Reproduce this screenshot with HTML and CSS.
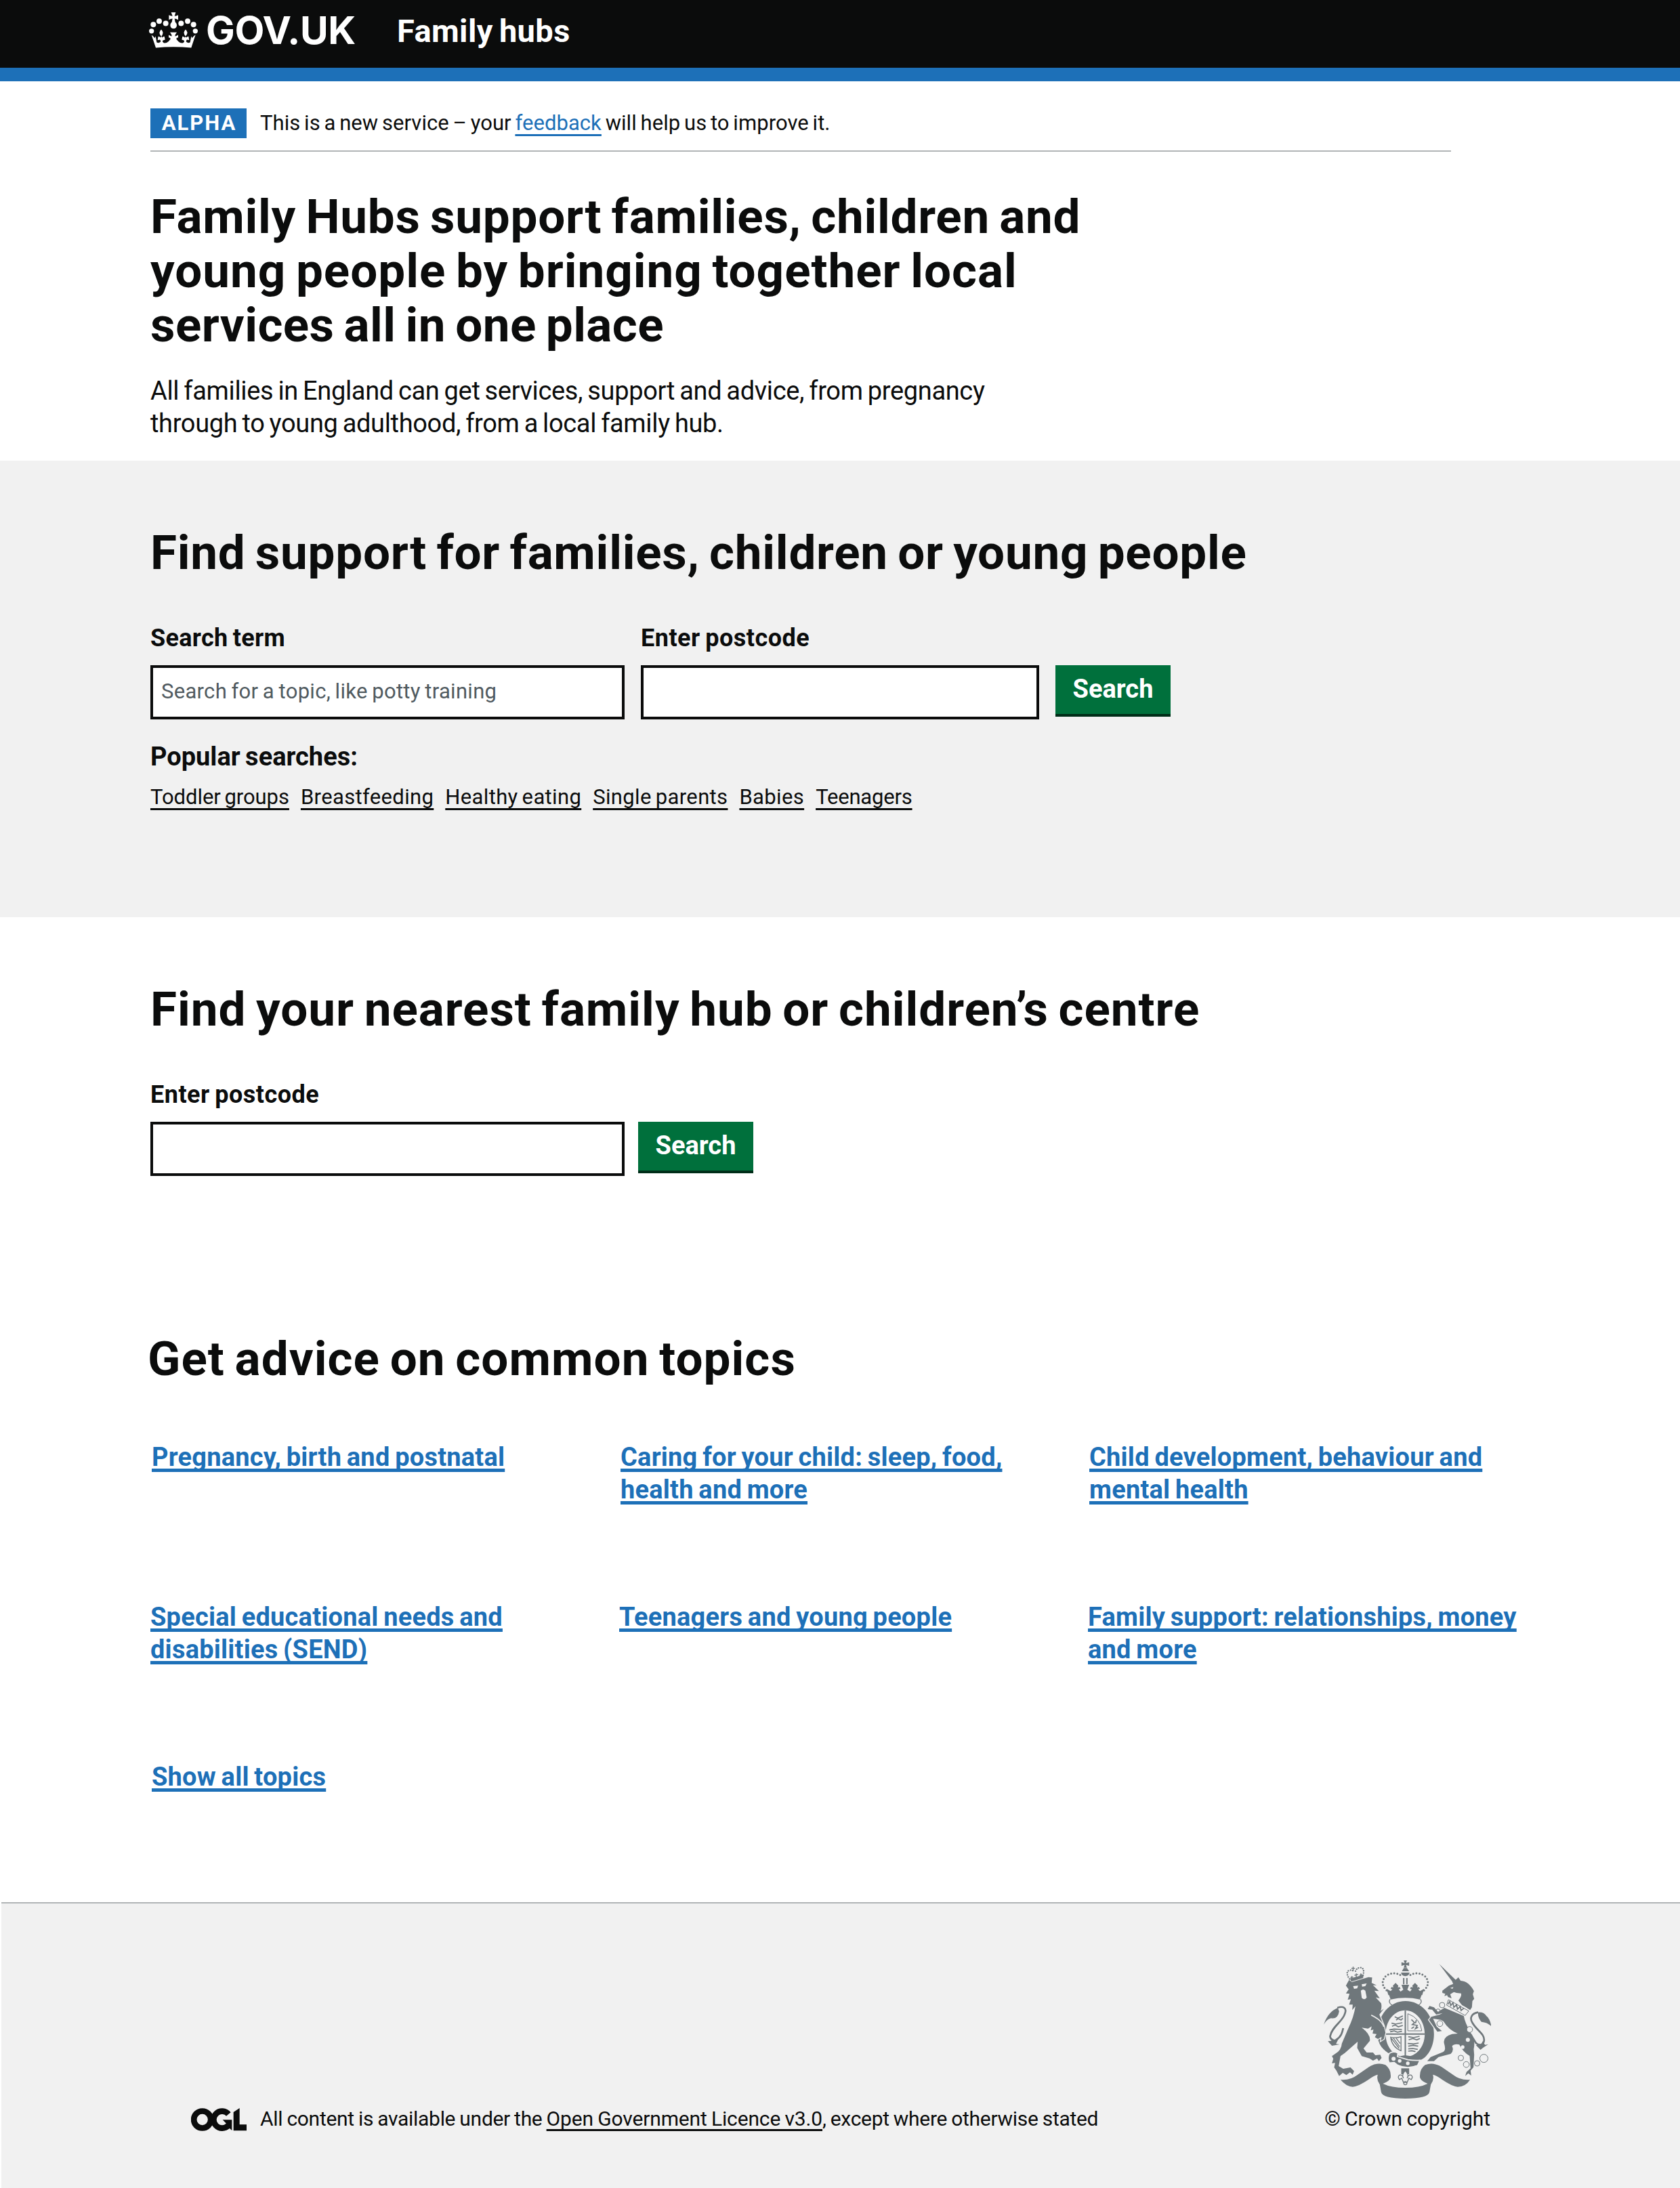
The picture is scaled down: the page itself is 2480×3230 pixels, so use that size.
FILE: index.html
```html
<!DOCTYPE html>
<html lang="en">
<head>
<meta charset="utf-8">
<title>Family hubs - GOV.UK</title>
<link rel="stylesheet" href="styles.css">
</head>
<body>
<header class="header">
  <a class="logo" href="#">
    <svg class="logo-crown" viewBox="15 17 216 158" aria-hidden="true">
      <g fill="#fff">
        <circle cx="26" cy="100" r="11"/><circle cx="34" cy="71" r="12"/><circle cx="60" cy="56" r="12"/><circle cx="89" cy="66" r="12"/>
        <circle cx="157" cy="66" r="12"/><circle cx="186" cy="56" r="12"/><circle cx="212" cy="71" r="12"/><circle cx="220" cy="100" r="11"/>
        <path d="M113 17h20l-5 17q9-1 16-5v21q-7-4-16-5l3 15q7 6 7 15a14 14 0 0 1-29 0q0-9 7-15l3-15q-9 1-16 5V29q7 4 16 5z"/>
        <path d="M26 118L45 174Q123 166 202 174L221 116Q212 122 206 131L202 123 197 150Q188 155 180 148 178 143 183 138L193 140 190 124Q184 124 180 129L176 124Q187 112 184 105 182 98 177 93 172 98 170 105 168 112 177 124L173 129Q169 124 163 124L160 138 170 142Q174 148 166 152 156 156 145 146L136 136Q136 127 144 129V117Q138 122 130 123 131 114 138 106H108Q115 114 116 123 108 122 102 117V129Q110 127 110 136L101 146Q90 156 80 152 72 148 76 142L86 138 83 124Q77 124 73 129L70 124Q78 112 76 105 74 98 69 93 64 98 62 105 59 112 69 124L66 129Q62 124 56 124L53 140 63 138Q68 143 66 148 58 155 49 150L44 123 40 131Q34 122 26 118z"/>
      </g>
    </svg>
    <span class="logo-text">GOV.UK</span>
  </a>
  <span class="service">Family hubs</span>
</header>

<main>
  <section class="intro">
    <div class="phase">
      <strong class="tag">ALPHA</strong>
      <span>This is a new service – your <a class="link" href="#">feedback</a> will help us to improve it.</span>
    </div>
    <h1 class="heading">Family Hubs support families, children and<br><span class="heading-wide">young people by bringing together local</span><br><span class="heading-narrow">services all in one place</span></h1>
    <p class="lead">All families in England can get services, support and advice, from pregnancy<br>through to young adulthood, from a local family hub.</p>
  </section>

  <section class="finder finder-grey">
    <h2 class="heading">Find support for families, children or young people</h2>
    <form class="fields">
      <div class="field"><label class="label" for="term">Search term</label><input class="input input-wide" id="term" type="text" placeholder="Search for a topic, like potty training"></div>
      <div class="field"><label class="label label-postcode" for="pc1">Enter postcode</label><input class="input input-mid" id="pc1" type="text"></div>
      <button class="button" type="button">Search</button>
    </form>
    <h3 class="popular-title">Popular searches:</h3>
    <nav class="popular">
      <a href="#">Toddler groups</a><a href="#">Breastfeeding</a><a href="#">Healthy eating</a><a href="#">Single parents</a><a href="#">Babies</a><a href="#">Teenagers</a>
    </nav>
  </section>

  <section class="finder">
    <h2 class="heading heading-wide">Find your nearest family hub or children’s centre</h2>
    <form class="fields fields-tight">
      <div class="field"><label class="label label-postcode" for="pc2">Enter postcode</label><input class="input input-wide" id="pc2" type="text"></div>
      <button class="button" type="button">Search</button>
    </form>
  </section>

  <section class="topics">
    <h2 class="heading topics-title">Get advice on common topics</h2>
    <div class="topic-grid topic-row-offset">
      <a href="#">Pregnancy, birth and postnatal</a>
      <a href="#">Caring for your child: sleep, food,<br>health and more</a>
      <a href="#">Child development, behaviour and<br>mental health</a>
    </div>
    <div class="topic-grid">
      <a href="#">Special educational needs and<br>disabilities (SEND)</a>
      <a href="#">Teenagers and young people</a>
      <a href="#">Family support: relationships, money<br>and more</a>
    </div>
    <div class="topic-grid topic-row-offset topic-row-last">
      <a href="#">Show all topics</a>
    </div>
  </section>
</main>

<footer class="footer">
  <div class="licence">
    <svg class="ogl" viewBox="21 36 246 102" aria-hidden="true">
      <g fill="none" stroke="#0b0c0c" stroke-width="26">
        <circle cx="71" cy="87" r="37.5"/>
        <path d="M187 63A37.5 37.5 0 1 0 186 113"/>
      </g>
      <path fill="#0b0c0c" d="M161 88h41v47l-10-9-16 8-8-23 10-5zM209 54l27-18v73h31v27h-58z"/>
    </svg>
    <span class="licence-text">All content is available under the <a class="licence-link" href="#">Open Government Licence v3.0</a>, except where otherwise stated</span>
  </div>
  <div class="copyright">
    <svg class="arms" viewBox="72 72 740 612" aria-hidden="true">
      <g fill="#6f777b">
        <!-- motto ribbon -->
        <path d="M146 600Q190 604 220 580L270 545Q310 520 345 535 372 555 368 592 362 608 334 618 370 636 433 636T532 618Q504 608 498 592 494 555 521 535 556 520 596 545L646 580Q676 604 720 600 700 632 665 632 640 630 596 600 570 580 555 578 562 600 546 622L540 655Q534 684 433 684T326 655L320 622Q304 600 311 578 296 580 270 600 226 630 200 632 170 630 146 600z"/>
        <!-- garter and shield divisions -->
        <path fill-rule="evenodd" d="M434 252c70 0 126 62 126 146 0 66-38 120-82 120q-24 0-44-4-26 2-60-22c-40-22-64-48-64-94 0-84 54-146 124-146zm-2 41c-48 0-86 46-86 105s38 101 86 101 87-42 87-101-39-105-87-105z"/>
        <path d="M430 294h6v202h-6zM347 395h172v6H347zM412 496l20-4 24 4-10 14-30-4z"/>
        <!-- crown -->
        <path d="M358 217q76-16 150 0l-10 28q-64-14-130 0z"/>
        <path d="M350 198l18 10 8-8-8-2 4-8 8 2-2-8 12-12 12 12-2 8 8-2 4 8-8 2 8 10 12-8-8-22h34l-8 22 12 8 8-10-8-2 4-8 8 2-2-8 12-12 12 12-2 8 8-2 4 8-8 2 8 8 18-10-8 28q-75-16-150 0z"/>
        <path d="M426 72h14l-4 12 14-4v16l-14-4 4 12h-14l4-12-14 4V80l14 4zM418 120l8-14h14l10 14zM414 126h38q-2 14-19 16-17-2-19-16zM423 150h6v28h-6zM437 150h6v28h-6z"/>
        <!-- lion -->
        <path stroke="#f1f1f1" stroke-width="8" paint-order="stroke" d="M170 184L184 158 196 168 270 146 286 148 284 172 306 182 290 182 316 208 296 206 320 240 302 236 326 262Q330 280 324 296L338 286 318 312 338 362 345 392 338 420 325 428 328 410 312 420 298 412 306 398 288 396 292 378 280 382 284 364 268 374 240 370Q280 400 276 428L248 462 262 480 290 480 300 492 322 490 328 504 316 518 308 506 290 516 275 506 240 496 220 460 222 432 165 482 146 496 138 540 158 552 190 546 206 562 200 578 188 568 172 580 156 570 140 584 128 560 118 546 122 526 108 528 114 508 108 496 122 486Q150 470 152 440L180 374Q206 320 212 275L198 292 200 268 184 268 192 244 178 246 186 220 170 218 182 200z"/>
        <path d="M72 356Q90 300 134 282L140 298Q134 334 104 328 84 334 72 356zM90 430L106 428 102 412 120 426 138 418 126 442 142 444 108 450z"/>
        <path d="M188 152L248 136 246 150 194 166z"/>
        <!-- unicorn -->
        <path d="M583 88L656 158 668 147 678 162Q715 165 737 208L732 222 738 242 730 252 728 280 720 292Q700 278 684 270L668 250Q684 230 680 218L660 216 648 212 632 222 638 240 622 234 618 226 606 230 610 220 597 216 597 206 626 184 645 176 640 164z"/>
        <path stroke="#f1f1f1" stroke-width="8" paint-order="stroke" d="M606 282L692 318Q696 345 722 392 745 420 736 465L738 490 735 545 722 560 725 582 712 572 698 584 704 566 722 550 718 495Q690 480 672 445 650 440 640 452 650 470 634 486L580 500 560 518 530 518 545 500 600 478Q615 470 605 440 598 410 640 398L665 396Q625 380 602 342L590 335 556 330 572 365 595 385 575 388 538 335 548 322 585 312 598 305 570 312 552 290 532 288 540 274 560 280 578 300z"/>
        <path d="M814 364Q796 346 770 344 752 324 756 302 780 300 792 318 808 330 814 364zM746 448L760 440 766 450 776 430 786 446 800 444 778 458 766 468z"/>
      </g>
      <g fill="none" stroke="#6f777b">
        <path stroke-width="8" d="M132 282C160 272 174 284 166 306 158 342 108 364 100 408 102 428 122 428 126 424 150 410 154 390 158 372M756 302C728 306 716 326 730 348 750 384 784 396 782 426 780 446 762 452 746 438L722 400"/>
        <path stroke-width="9" stroke-dasharray="0 14" stroke-linecap="round" d="M350 205Q318 172 346 142 380 116 420 142M516 205Q548 172 520 142 486 116 446 142"/>
        <path stroke-width="7" stroke-dasharray="0 10" stroke-linecap="round" d="M186 154Q166 126 184 116 200 112 206 124M246 138Q254 108 236 104 216 104 212 122"/>
        <path stroke-width="4" d="M366 244q-10 14 8 26M500 244q10 14-8 26M202 100v20M194 107h16M196 156v-14M216 150v-20M236 144v-14M208 138l16-4M190 148l12-3M230 138l12-3"/>
        <path stroke="#f1f1f1" stroke-width="5" d="M282 314Q328 336 338 366"/>
        <!-- charges on the shield -->
        <g stroke-width="5">
          <path d="M386 322l14 6 22-10M392 336l10-6 12 6 8-8M372 350l18 4 30-6M374 364l14-6 14 8 20-6M362 380l22-4 34 2M366 388l18-4 14 6 20-4"/>
          <path d="M446 410l24 4 26-6M448 424l18-6 18 6 14-6M444 440l26 2 22-4M446 452l22-4 22 4M446 464l20-2 22 4M446 474l16-2 16 4"/>
          <path d="M460 334l14 14-10 8 22 4-8 14 12-6M482 336l-4 14M460 374l12-8"/>
          <path stroke-width="4" d="M368 412q26 6 46-2v62q-40-16-46-60zM380 416l28 38M392 416l18 24M372 418l34 44"/>
        </g>
        <path stroke-width="3" d="M444 308v76h62M444 308q56 20 62 76"/>
        <!-- chain -->
        <g stroke-width="3"><circle cx="596" cy="270" r="12"/><circle cx="578" cy="296" r="9"/><circle cx="586" cy="352" r="13" fill="#f1f1f1"/><circle cx="718" cy="378" r="13" fill="#f1f1f1"/><circle cx="679" cy="504" r="12"/><circle cx="703" cy="533" r="13"/><circle cx="751" cy="528" r="12"/><circle cx="781" cy="506" r="18"/></g>
        <path fill="#f1f1f1" stroke-width="3" d="M624 246L714 296 698 316 616 270z"/>
        <path stroke-width="5" d="M622 266l8-12 4 18 10-12 4 20 12-12 4 20 12-12 4 18 12-10"/>
      </g>
      <g fill="#f1f1f1"><circle cx="710" cy="424" r="9"/><circle cx="687" cy="456" r="8"/><path d="M236 206q10-10 20 0l6 30q-10 14-22 2zM202 186l22-2-4 12-14 2zM240 178l22-4-6 12-14 2zM632 194l14-4-4 8z"/></g>
      <!-- buckle and tail of the garter -->
      <path d="M362 484q16-12 38-2l-2 16 46 14q30 4 54 2l-10 22q-46 22-92-2l-12-10-22 2q-10-22 0-42z" fill="#6f777b" stroke="#f1f1f1" stroke-width="5"/>
      <circle cx="381" cy="508" r="9" fill="#f1f1f1"/><circle cx="408" cy="517" r="8" fill="#f1f1f1"/><circle cx="444" cy="528" r="8" fill="#f1f1f1"/>
      <path fill="#6f777b" d="M415 550h35v26h-35z"/>
      <path fill="#f1f1f1" stroke="#6f777b" stroke-width="4" d="M433 560q-18 18-8 34-6-18-18-14-10 8 0 20l10-6 8 18h16l8-18 10 6q10-12 0-20-12-4-18 14 10-16-8-34zM426 616a7 7 0 1 0 14 0 7 7 0 1 0-14 0"/>
    </svg>
    <a class="copyright-text" href="#">© Crown copyright</a>
  </div>
</footer>
</body>
</html>
```
FILE: styles.css
```css
* { box-sizing: border-box; }

body {
  margin: 0;
  background: #fff;
  color: #0b0c0c;
  font-family: Roboto, "Liberation Sans", sans-serif;
  font-size: 31px;
  line-height: 44px;
  white-space: nowrap;
}

h1, h2, h3, p { margin: 0; }
a { color: inherit; }

/* Header */
.header {
  display: flex;
  align-items: flex-start;
  height: 120px;
  padding-left: 220px;
  background: #0b0c0c;
  border-bottom: 20px solid #1d70b8;
  color: #fff;
}
.logo { display: flex; width: 368px; text-decoration: none; }
.logo-crown { width: 72px; height: 53px; margin-top: 18px; }
.logo-text {
  margin: 15px 0 0 12px;
  font: 700 57px/60px Inter, sans-serif;
  letter-spacing: -0.4px;
}
.service {
  margin: 16px 0 0 -2px;
  font-size: 47px;
  font-weight: 700;
  line-height: 60px;
  letter-spacing: 0.4px;
  word-spacing: -3px;
}

/* Intro */
.intro { height: 560px; padding: 40px 0 0 222px; }
.phase {
  display: flex;
  gap: 20px;
  width: 1920px;
  height: 64px;
  border-bottom: 2px solid #b1b4b6;
  letter-spacing: 0.06px;
  word-spacing: -2px;
}
.tag {
  width: 142px;
  height: 44px;
  background: #1d70b8;
  color: #fff;
  font-weight: 700;
  letter-spacing: 2px;
  text-align: center;
  text-indent: 2px;
}
.link {
  color: #1d70b8;
  text-decoration-thickness: 2.5px;
  text-underline-offset: 6px;
  text-decoration-skip-ink: none;
}
.heading {
  font-size: 71px;
  font-weight: 700;
  line-height: 80px;
  letter-spacing: 0.74px;
  word-spacing: -4px;
}
.heading-wide { letter-spacing: 0.98px; }
.heading-narrow { letter-spacing: 0.44px; }
.intro .heading { margin-top: 56px; }
.lead {
  margin-top: 33px;
  font-size: 38px;
  line-height: 48px;
  letter-spacing: -0.34px;
  word-spacing: -2px;
}

/* Search sections */
.finder { padding: 96px 0 0 222px; }
.finder-grey { height: 674px; background: #f1f1f1; }
.fields { display: flex; align-items: flex-end; gap: 24px; margin-top: 62px; }
.fields-tight { gap: 20px; }
.field { display: flex; flex-direction: column; gap: 16px; }
.label {
  font-size: 36px;
  font-weight: 700;
  line-height: 48px;
  letter-spacing: 0.3px;
  word-spacing: -2px;
}
.label-postcode { letter-spacing: 0.5px; }
.input {
  height: 80px;
  padding: 0 12px 4px;
  border: 4px solid #0b0c0c;
  border-radius: 0;
  background: #fff;
  font: 31px/44px Roboto, sans-serif;
  letter-spacing: 0.3px;
  word-spacing: -1.5px;
}
.input::placeholder { color: #505a5f; opacity: 1; }
.input-wide { width: 700px; }
.input-mid { width: 588px; }
.button {
  width: 170px;
  height: 76px;
  margin-bottom: 4px;
  padding: 0 0 2px;
  border: 0;
  border-bottom: 4px solid #002d18;
  background: #00703c;
  color: #fff;
  font: 700 38px/70px Roboto, sans-serif;
}
.popular-title {
  margin-top: 31px;
  font-size: 38px;
  line-height: 48px;
  word-spacing: -2px;
}
.popular {
  display: flex;
  gap: 17px;
  margin-top: 14px;
  letter-spacing: 0.35px;
  word-spacing: -2px;
}
.popular a {
  text-decoration-thickness: 2.5px;
  text-underline-offset: 6px;
  text-decoration-skip-ink: none;
}
.popular a:first-child { letter-spacing: -0.05px; }
.popular a:last-child { letter-spacing: -0.2px; }

/* Topics */
.topics { padding: 230px 0 0 222px; }
.topics-title { margin: 0 0 81px -4px; letter-spacing: 1.05px; }
.topic-grid {
  display: grid;
  grid-template-columns: repeat(3, 692px);
  height: 236px;
  color: #1d70b8;
  font-size: 38px;
  font-weight: 700;
  line-height: 48px;
  letter-spacing: 0.22px;
  word-spacing: -2px;
}
.topic-grid a {
  justify-self: start;
  text-decoration-thickness: 4.5px;
  text-underline-offset: 4px;
  text-decoration-skip-ink: none;
}
.topic-row-offset { padding-left: 2px; }
.topic-row-last { height: 209px; }

/* Footer */
.footer {
  display: flex;
  align-items: flex-end;
  justify-content: space-between;
  height: 422px;
  margin-left: 2px;
  padding: 0 279px 82px 280px;
  border-top: 2px solid #b1b4b6;
  background: #f1f1f1;
  font-size: 30px;
  line-height: 40px;
}
.licence { display: flex; align-items: flex-end; gap: 20px; }
.ogl { width: 82px; height: 34px; margin-bottom: 2px; }
.licence-text { letter-spacing: -0.3px; word-spacing: -1px; }
.licence-link {
  letter-spacing: -0.15px;
  text-decoration-thickness: 3px;
  text-underline-offset: 5px;
  text-decoration-skip-ink: none;
}
.copyright { display: flex; flex-direction: column; align-items: center; gap: 10px; }
.arms { width: 247px; height: 204px; }
.copyright-text { letter-spacing: -0.1px; word-spacing: -1px; text-decoration: none; }
```
